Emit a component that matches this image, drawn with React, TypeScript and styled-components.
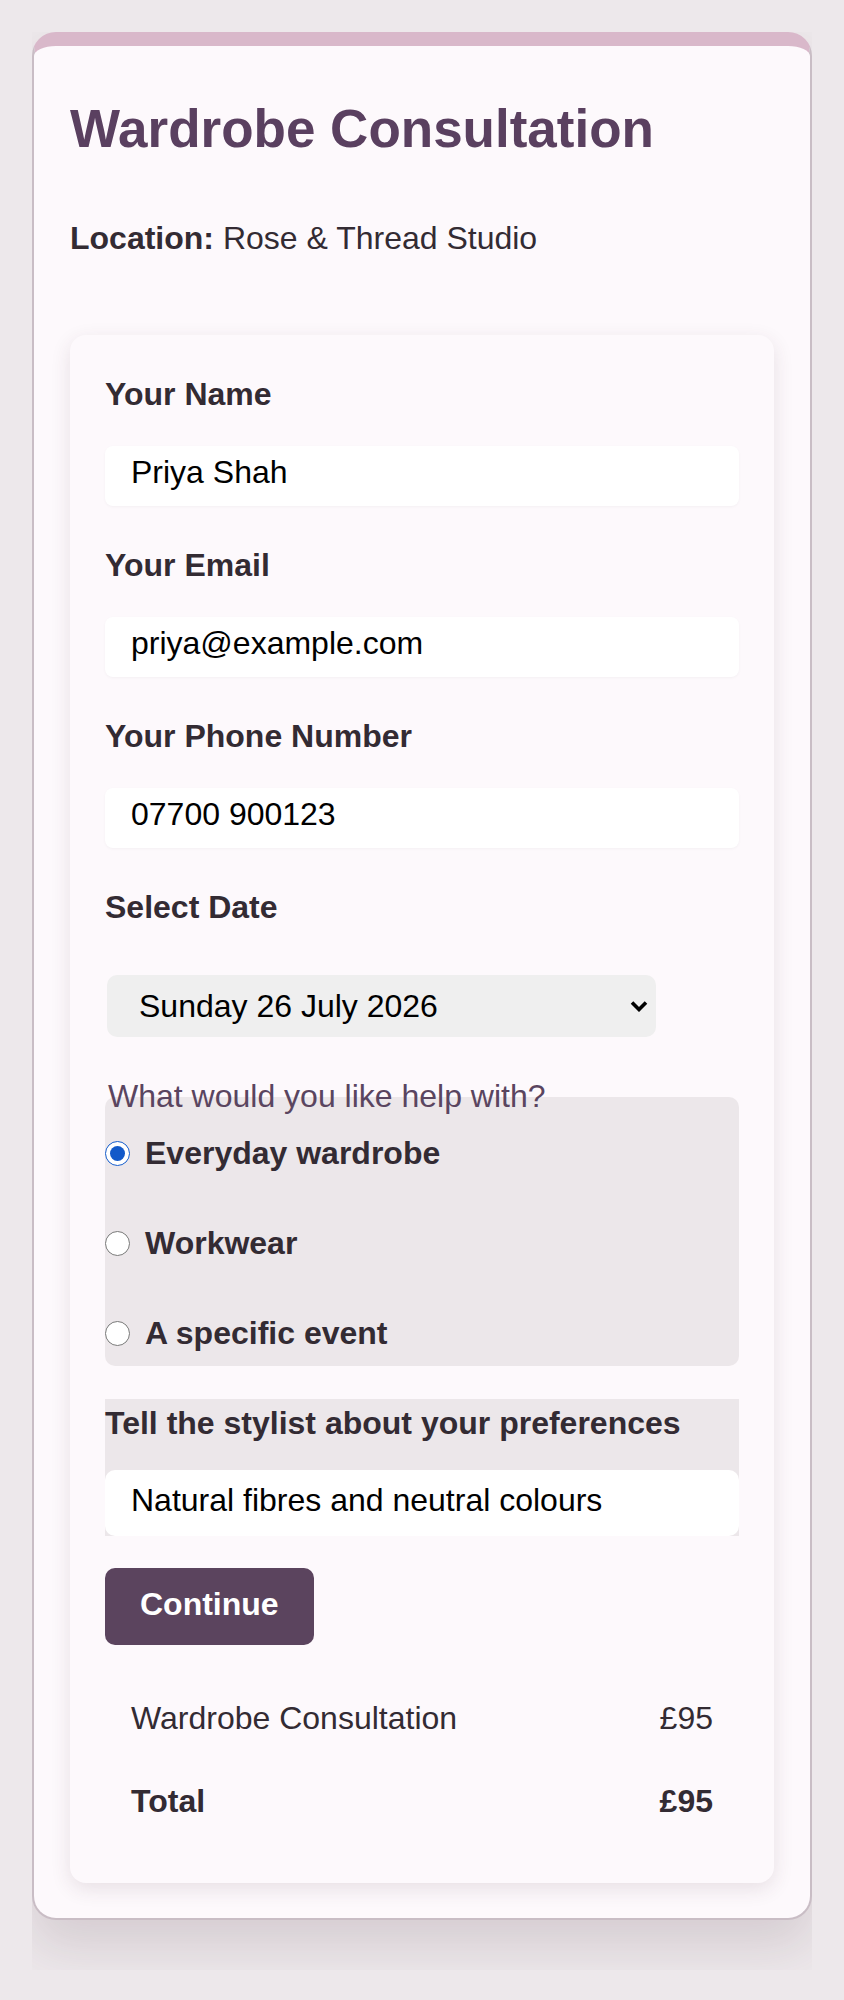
import React from 'react';
import styled, {createGlobalStyle} from 'styled-components';

const GlobalStyle = createGlobalStyle`
  * {
    box-sizing: border-box;
  }
  html,
  body {
    background: #ede8eb;
  }
  body {
    margin: 8px;
    font-family: 'Liberation Sans', Arial, sans-serif;
    color: #332b33;
  }
`;

const Page = styled.div`
  padding: 24px 24px 0;
`;

// clips the card shadow into a flat band under the card
const ShadowClip = styled.div`
  overflow: hidden;
  padding-bottom: 50px;
`;

const Card = styled.main`
  background: #fdf9fc;
  border: 2px solid #c9bdc5;
  border-top: 14px solid #d9b8ca;
  border-radius: 24px;
  padding: 36px 36px 35px;
  box-shadow: 0 26px 50px rgba(70, 40, 60, 0.14);
`;

const Title = styled.h1`
  margin: 16px 0 61px;
  font-size: 53px;
  font-weight: 700;
  line-height: normal;
  color: #5a4060;
`;

const Location = styled.p`
  margin: 0 0 78px;
  font-size: 32px;
  & strong {
    font-weight: 700;
  }
`;

const Panel = styled.form`
  display: flex;
  flex-direction: column;
  background: #fdf9fc;
  border-radius: 16px;
  padding: 41px 35px 40px;
  box-shadow: 0 6px 20px rgba(70, 40, 60, 0.12);
`;

const Field = styled.div`
  display: flex;
  flex-direction: column;
  margin-bottom: 41px;
`;

const Label = styled.label`
  display: block;
  margin-bottom: 33px;
  font-size: 32px;
  font-weight: 700;
`;

const TextInput = styled.input`
  width: 100%;
  height: 60px;
  padding: 8px 26px 16px;
  border: none;
  border-radius: 8px;
  background: #fff;
  box-shadow: 0 1px 3px rgba(0, 0, 0, 0.04);
  font-family: inherit;
  font-size: 32px;
  color: #000;
  outline: none;
`;

const SelectWrap = styled.div`
  position: relative;
  width: 549px;
  margin: 16px 0 0 2px;
  & > svg {
    position: absolute;
    right: 8px;
    top: 50%;
    transform: translateY(-50%);
    pointer-events: none;
  }
`;

const DateSelect = styled.select`
  appearance: none;
  width: 100%;
  height: 62px;
  padding: 0 40px 0 32px;
  border: none;
  border-radius: 10px;
  background: #efefef;
  font-family: inherit;
  font-size: 32px;
  color: #000;
`;

const Choices = styled.fieldset`
  margin: 0 0 33px;
  padding: 20px 0 14px;
  border: none;
  border-radius: 10px;
  background: #ece7ea;
  min-width: 0;
`;

const Legend = styled.legend`
  padding: 0 3px;
  font-size: 32px;
  color: #5a4560;
`;

const OptionList = styled.div`
  display: flex;
  flex-direction: column;
  gap: 53px;
`;

const Option = styled.label`
  display: flex;
  align-items: center;
  gap: 15px;
  font-size: 32px;
  font-weight: 700;
  & > input {
    width: 25px;
    height: 25px;
    margin: 0;
    accent-color: #1259c9;
  }
`;

const NotesBox = styled.div`
  display: flex;
  flex-direction: column;
  padding-top: 6px;
  background: #ece7ea;
`;

const NotesLabel = styled(Label)`
  margin-bottom: 28px;
`;

const Notes = styled.textarea`
  display: block;
  width: 100%;
  height: 66px;
  padding: 12px 26px;
  border: none;
  border-radius: 10px;
  background: #fff;
  font-family: inherit;
  font-size: 32px;
  color: #000;
  resize: none;
  overflow: hidden;
  outline: none;
`;

const ContinueButton = styled.button`
  align-self: flex-start;
  margin-top: 32px;
  height: 77px;
  padding: 0 35px 4px;
  border: none;
  border-radius: 10px;
  background: #5b445e;
  color: #fff;
  font-family: inherit;
  font-size: 32px;
  font-weight: 700;
`;

const Summary = styled.table`
  width: 100%;
  margin-top: 32px;
  border-collapse: collapse;
  font-size: 32px;
  & td {
    padding: 23px 26px;
  }
  & td:last-child {
    text-align: right;
  }
`;

const TotalRow = styled.tr`
  font-weight: 700;
`;

const Chevron = () => (
  <svg width="18" height="12" viewBox="0 0 18 12" fill="none">
    <path d="M2 2.5 L9 9.5 L16 2.5" stroke="#000" strokeWidth="3.6" strokeLinejoin="miter" />
  </svg>
);

const fields = [
  {id: 'name', label: 'Your Name', type: 'text', value: 'Priya Shah'},
  {id: 'email', label: 'Your Email', type: 'email', value: 'priya@example.com'},
  {id: 'phone', label: 'Your Phone Number', type: 'tel', value: '07700 900123'},
];

const helpOptions = ['Everyday wardrobe', 'Workwear', 'A specific event'];

export default function App() {
  return (
    <>
      <GlobalStyle />
      <Page>
        <ShadowClip>
          <Card>
            <Title>Wardrobe Consultation</Title>
            <Location>
              <strong>Location:</strong> Rose &amp; Thread Studio
            </Location>
            <Panel onSubmit={(e) => e.preventDefault()}>
              {fields.map((f) => (
                <Field key={f.id}>
                  <Label htmlFor={f.id}>{f.label}</Label>
                  <TextInput id={f.id} type={f.type} defaultValue={f.value} />
                </Field>
              ))}
              <Field>
                <Label htmlFor="date">Select Date</Label>
                <SelectWrap>
                  <DateSelect id="date" defaultValue="2026-07-26">
                    <option value="2026-07-26">Sunday 26 July 2026</option>
                    <option value="2026-07-29">Wednesday 29 July 2026</option>
                  </DateSelect>
                  <Chevron />
                </SelectWrap>
              </Field>
              <Choices>
                <Legend>What would you like help with?</Legend>
                <OptionList>
                  {helpOptions.map((o, i) => (
                    <Option key={o}>
                      <input type="radio" name="help" defaultChecked={i === 0} />
                      {o}
                    </Option>
                  ))}
                </OptionList>
              </Choices>
              <NotesBox>
                <NotesLabel htmlFor="notes">Tell the stylist about your preferences</NotesLabel>
                <Notes id="notes" rows={1} defaultValue="Natural fibres and neutral colours" />
              </NotesBox>
              <ContinueButton type="submit">Continue</ContinueButton>
              <Summary>
                <tbody>
                  <tr>
                    <td>Wardrobe Consultation</td>
                    <td>£95</td>
                  </tr>
                  <TotalRow>
                    <td>Total</td>
                    <td>£95</td>
                  </TotalRow>
                </tbody>
              </Summary>
            </Panel>
          </Card>
        </ShadowClip>
      </Page>
    </>
  );
}
